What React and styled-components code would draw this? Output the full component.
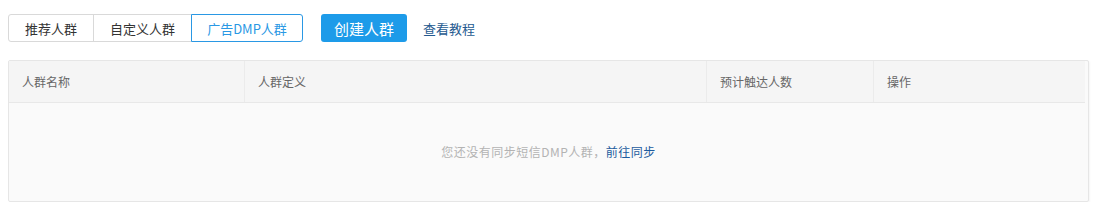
import React from "react";
import styled, { createGlobalStyle } from "styled-components";

const Global = createGlobalStyle`
  html, body { margin: 0; padding: 0; background: #fff; }
  body { font-family: "Microsoft YaHei", "Noto Sans CJK SC", "Noto Sans", sans-serif; color: #333; }
`;

const Page = styled.div`
  padding: 14px 13px 0 8px;
  width: 1102px;
  box-sizing: border-box;
`;

const Toolbar = styled.div`
  display: flex;
  align-items: center;
  height: 28px;
`;

const TabGroup = styled.div`
  display: flex;
  height: 28px;
`;

const Tab = styled.div`
  box-sizing: border-box;
  width: ${(p) => p.$w}px;
  height: 28px;
  display: flex;
  align-items: center;
  justify-content: center;
  font-size: 13px;
  color: ${(p) => (p.$active ? "#2a98e4" : "#333")};
  border: 1px solid ${(p) => (p.$active ? "#2a98e4" : "#d9d9d9")};
  margin-left: ${(p) => (p.$first ? 0 : -1)}px;
  position: relative;
  z-index: ${(p) => (p.$active ? 1 : 0)};
  background: #fff;
  &:first-child { border-radius: 3px 0 0 3px; }
  &:last-child { border-radius: 0 3px 3px 0; }
`;

const PrimaryButton = styled.div`
  margin-left: 18px;
  width: 86px;
  height: 28px;
  border-radius: 3px;
  background: #1d9be9;
  color: #fff;
  font-size: 15px;
  display: flex;
  align-items: center;
  justify-content: center;
`;

const Link = styled.span`
  margin-left: 16px;
  font-size: 13px;
  color: #24598f;
`;

const Table = styled.div`
  margin-top: 18px;
  box-sizing: border-box;
  height: 142px;
  border: 1px solid #e6e6e6;
  border-radius: 2px;
  background: #fafafa;
  box-shadow: 1px 1px 2px rgba(0, 0, 0, 0.04);
  display: flex;
  flex-direction: column;
`;

const HeaderRow = styled.div`
  display: grid;
  grid-template-columns: 235px 462px 167px 1fr;
  height: 41px;
  margin-right: 3px;
  background: #f5f5f5;
  border-bottom: 1px solid #e8e8e8;
`;

const HeaderCell = styled.div`
  display: flex;
  align-items: center;
  padding-left: 13px;
  font-size: 12px;
  color: #666;
  border-left: ${(p) => (p.$first ? "none" : "1px solid #ebebeb")};
`;

const Empty = styled.div`
  flex: 1;
  display: flex;
  align-items: center;
  justify-content: center;
  font-size: 12px;
  letter-spacing: 0.5px;
  color: #b3b3b3;
  padding-bottom: 2px;
`;

const EmptyLink = styled.span`
  color: #1c5b9e;
`;

export default function App() {
  return (
    <>
      <Global />
      <Page>
        <Toolbar>
          <TabGroup>
            <Tab $w={86} $first>推荐人群</Tab>
            <Tab $w={99}>自定义人群</Tab>
            <Tab $w={112} $active>广告DMP人群</Tab>
          </TabGroup>
          <PrimaryButton>创建人群</PrimaryButton>
          <Link>查看教程</Link>
        </Toolbar>
        <Table>
          <HeaderRow>
            <HeaderCell $first>人群名称</HeaderCell>
            <HeaderCell>人群定义</HeaderCell>
            <HeaderCell>预计触达人数</HeaderCell>
            <HeaderCell>操作</HeaderCell>
          </HeaderRow>
          <Empty>
            您还没有同步短信DMP人群，<EmptyLink>前往同步</EmptyLink>
          </Empty>
        </Table>
      </Page>
    </>
  );
}
